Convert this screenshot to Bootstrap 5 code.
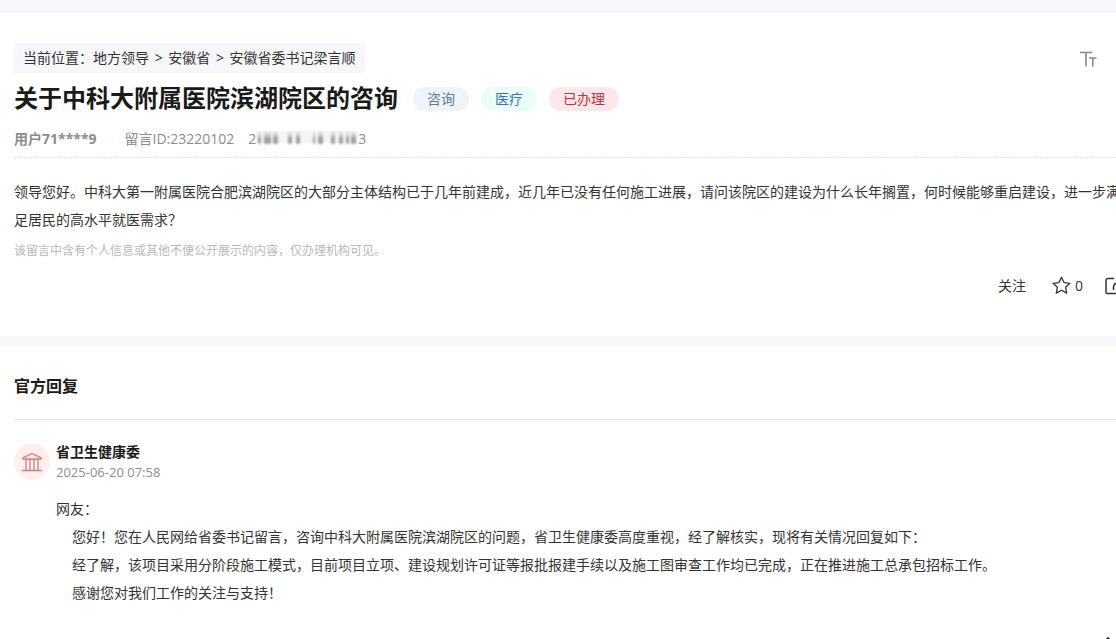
<!DOCTYPE html>
<html lang="zh-CN">
<head>
<meta charset="utf-8">
<meta name="viewport" content="width=device-width, initial-scale=1">
<title>关于中科大附属医院滨湖院区的咨询</title>
<link href="https://cdn.jsdelivr.net/npm/bootstrap@5.3.0/dist/css/bootstrap.min.css" rel="stylesheet">
<style>
  body { font-family: "Open Sans", "Noto Sans CJK SC", sans-serif; font-size: 14px; line-height: 28px; color: #333; background: #fff; overflow-x: hidden; }
  a { color: inherit; text-decoration: none; }
  .strip { background: #f6f7fa; height: 10px; }
  .strip-top { height: 13px; }
  .sheet { padding-left: 14px; margin-right: -12px; }
  .question { padding-top: 30px; padding-bottom: 40px; }
  .crumbs { background: #f6f7fa; padding: 0 9px; height: 30px; line-height: 30px; white-space: pre; }
  .sep { padding: 0 2px; }
  .tool-btn { color: #888; margin-right: 30px; }
  .headline { font-size: 24px; line-height: 34px; font-weight: 700; color: #1a1a1a; }
  .tags { gap: 12px; margin: 2px 0 0 15px; }
  .tag { height: 24px; line-height: 24px; padding: 0 14px; border-radius: 12px; }
  .tag-type { background: #eff3fa; color: #667a94; }
  .tag-topic { background: #eafdf8; color: #3d73a6; }
  .tag-done { background: #fce8ea; color: #c4303e; }
  .meta { color: #8c8c8c; line-height: 24px; padding-bottom: 6px; margin-top: 12px; border-bottom: 1px dashed #e2e2e2; }
  .meta-id { margin-left: 28px; margin-right: 14px; }
  .message { margin-top: 20px; }
  .notice { font-size: 12px; line-height: 20px; color: #b8b8b8; margin-top: 7px; }
  .actions { margin-top: 14px; margin-right: 5px; }
  .action { font-size: 14px; color: #333; margin-right: 22px; }
  .follow { margin-right: 26px; }
  .section-title { font-size: 16px; line-height: 24px; font-weight: 700; color: #1a1a1a; padding: 28px 0 21px; border-bottom: 1px solid #e4e4e4; }
  .reply { margin-top: 22px; }
  .reply-body { margin-left: 6px; }
  .avatar { width: 36px; height: 36px; background: #feeeee; margin-top: 2px; }
  .org { line-height: 20px; color: #1a1a1a; }
  .stamp { font-size: 13px; line-height: 20px; color: #8c8c8c; }
  .answer { margin-top: 13px; }
  .answer p + p { padding-left: 16px; }
</style>
</head>
<body class="d-flex flex-column min-vh-100">
<div class="strip strip-top"></div>
<main>
  <section class="sheet question">
    <div class="d-flex justify-content-between align-items-center">
      <nav class="crumbs" aria-label="当前位置"><span>当前位置：</span><a href="#">地方领导</a><span class="sep"> &gt; </span><a href="#">安徽省</a><span class="sep"> &gt; </span><a href="#">安徽省委书记梁言顺</a></nav>
      <button type="button" class="btn p-0 border-0 d-flex tool-btn" aria-label="字号">
        <svg width="18" height="18" viewBox="0 0 18 18" fill="none" stroke="currentColor" stroke-width="1.6"><path d="M0 3.500H12M6 3.500V17.500M9 9H16.500M12.800 9V17.500"/></svg>
      </button>
    </div>
    <div class="d-flex align-items-center mt-2">
      <h1 class="headline mb-0">关于中科大附属医院滨湖院区的咨询</h1>
      <div class="tags d-flex">
        <span class="tag tag-type">咨询</span><span class="tag tag-topic">医疗</span><span class="tag tag-done">已办理</span>
      </div>
    </div>
    <div class="meta d-flex align-items-center">
      <strong>用户71****9</strong>
      <span class="meta-id">留言ID:23220102</span>
      <span class="d-flex align-items-center">2
        <svg width="102" height="18" viewBox="0 0 102 18" aria-hidden="true">
          <defs>
            <linearGradient id="fade" x1="0" y1="0" x2="0" y2="1"><stop offset="0" stop-color="#ddd" stop-opacity=".3"/><stop offset=".6" stop-color="#999"/><stop offset="1" stop-color="#aaa"/></linearGradient>
            <filter id="soft"><feGaussianBlur stdDeviation=".8"/></filter>
          </defs>
          <rect width="102" height="12" y="1" fill="#eee" opacity=".6"/>
          <g fill="url(#fade)" filter="url(#soft)"><path d="M2 1h3v13H2zM8 1h7v13H8zM17 1h5v13h-5zM32 1h4v13h-4zM40 1h4v13h-4zM57 1h2v13h-2zM62 1h5v13h-5zM75 1h4v13h-4zM83 1h4v13h-4zM90 1h3v13h-3zM95 1h5v13h-5z"/></g>
        </svg>3</span>
    </div>
    <p class="message mb-0">领导您好。中科大第一附属医院合肥滨湖院区的大部分主体结构已于几年前建成，近几年已没有任何施工进展，请问该院区的建设为什么长年搁置，何时候能够重启建设，进一步满足居民的高水平就医需求？</p>
    <p class="notice mb-0">该留言中含有个人信息或其他不便公开展示的内容，仅办理机构可见。</p>
    <div class="actions d-flex justify-content-end align-items-center">
      <button type="button" class="btn p-0 border-0 action follow">关注</button>
      <button type="button" class="btn p-0 border-0 d-flex align-items-center gap-1 action" aria-label="收藏 0">
        <svg width="19" height="19" viewBox="0 0 19 19" fill="none" stroke="#333" stroke-width="1.3" stroke-linejoin="round"><path d="M9.500 1.200l2.500 5.400 5.900.7-4.300 4 1.100 5.800-5.200-2.900-5.200 2.900 1.100-5.800-4.300-4 5.900-.7z"/></svg>0
      </button>
      <button type="button" class="btn p-0 border-0 d-flex" aria-label="分享">
        <svg width="18" height="18" viewBox="0 0 18 18" fill="none" stroke="#333" stroke-width="1.5"><path d="M9 1.500H3A2 2 0 0 0 1 3.500V15.500Q1 16.500 2 16.500H16V11M8.500 13V10Q9 6 13 6H17M13 2l4 4-4 4"/></svg>
      </button>
    </div>
  </section>
  <div class="strip"></div>
  <section class="sheet">
    <h2 class="section-title mb-0">官方回复</h2>
    <article class="reply d-flex">
      <div class="avatar rounded-circle flex-shrink-0 d-flex align-items-center justify-content-center">
        <svg width="20" height="20" viewBox="0 0 20 20" fill="none" stroke="#d28078" stroke-width="1.3"><path d="M1 5.800L10 1.500 19 5.800V7H1zM4 7v11M8 7v11M12 7v11M16 7v11M0 18.500H20"/></svg>
      </div>
      <div class="reply-body">
        <div class="org fw-bold">省卫生健康委</div>
        <time class="stamp d-block" datetime="2025-06-20T07:58">2025-06-20 07:58</time>
        <div class="answer">
          <p class="mb-0">网友：</p>
          <p class="mb-0">您好！您在人民网给省委书记留言，咨询中科大附属医院滨湖院区的问题，省卫生健康委高度重视，经了解核实，现将有关情况回复如下：</p>
          <p class="mb-0">经了解，该项目采用分阶段施工模式，目前项目立项、建设规划许可证等报批报建手续以及施工图审查工作均已完成，正在推进施工总承包招标工作。</p>
          <p class="mb-0">感谢您对我们工作的关注与支持！</p>
        </div>
      </div>
    </article>
  </section>
</main>
<div class="mt-auto d-flex justify-content-end pe-1"><svg width="8" height="3" viewBox="0 0 8 3" aria-hidden="true"><path d="M2 3Q4-1 6 3z" fill="#333"/></svg></div>
<script src="https://cdn.jsdelivr.net/npm/bootstrap@5.3.0/dist/js/bootstrap.bundle.min.js"></script>
</body>
</html>
